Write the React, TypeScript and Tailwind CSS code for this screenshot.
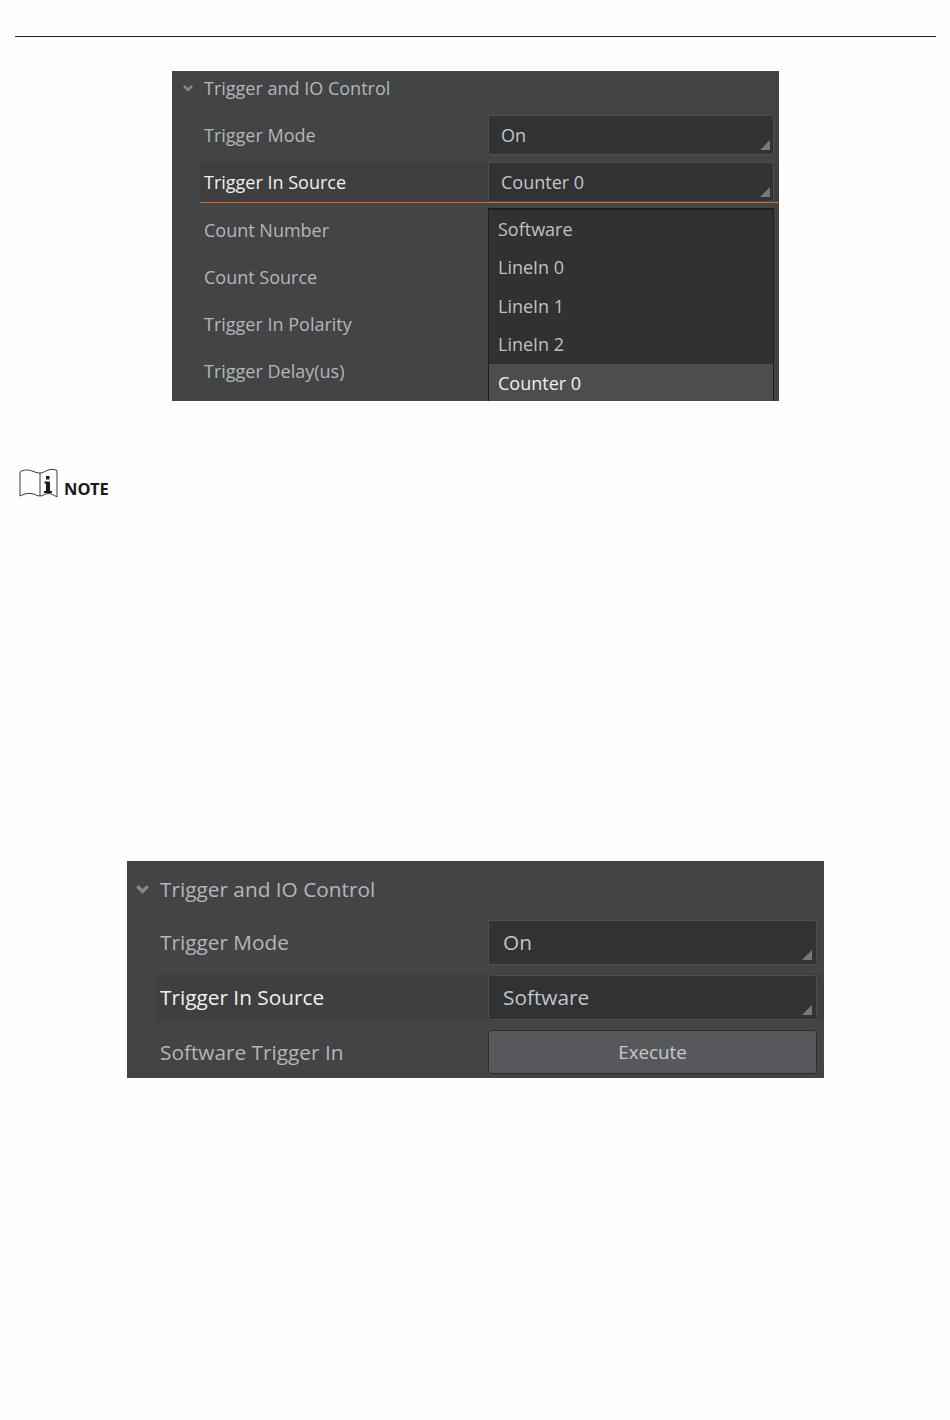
import React from 'react';

const FONT = "font-['Open_Sans','Noto_Sans',sans-serif]";

const Corner: React.FC<{ className: string }> = ({ className }) => (
  <svg className={`self-end shrink-0 ${className}`} width="10" height="10" viewBox="0 0 10 10">
    <polygon points="10,0 10,10 0,10" fill="#77787a" />
  </svg>
);

const Chevron: React.FC<{ size: number }> = ({ size }) => (
  <svg width={size} height={size * 0.7} viewBox="0 0 10 7">
    <path d="M1 1 L5 5 L9 1" fill="none" stroke="#848587" strokeWidth="2.6" />
  </svg>
);

const Select: React.FC<{ value: string; className: string; cornerClass: string }> = ({ value, className, cornerClass }) => (
  <div className={`${className} flex justify-between items-center bg-[#313234] border border-[#4e4f51] rounded-[3px]`}>
    <span className="pt-[1px] text-[#c3c5c7]">{value}</span>
    <Corner className={cornerClass} />
  </div>
);

const FirstPanel: React.FC = () => (
  <section className="relative w-[607px] h-[330px] ml-[172px] mt-[34px] bg-[#434446] overflow-hidden text-[18px] text-[#b4b6b8]">
    <header className="flex items-center h-[35px] pl-[11px]">
      <Chevron size={10} />
      <span className="ml-[11px]">Trigger and IO Control</span>
    </header>

    <div className="flex flex-col gap-[7px] mt-[9px] pl-[28px]">
      <div className="flex items-center h-[40px]">
        <span className="w-[288px] pl-[4px] pt-[1px]">Trigger Mode</span>
        <Select value="On" className="w-[286px] h-[40px] pl-[12px]" cornerClass="mb-[4px] mr-[3px]" />
      </div>
      <div className="flex items-center h-[41px] bg-[#3e3f3e] border-b border-[#e2661c]">
        <span className="w-[288px] pl-[4px] pt-[1px] text-[#f0f1f2]">Trigger In Source</span>
        <Select value="Counter 0" className="w-[286px] h-[40px] pl-[12px]" cornerClass="mb-[4px] mr-[3px]" />
      </div>
      <div className="flex items-center h-[40px] pl-[4px]">Count Number</div>
      <div className="flex items-center h-[40px] pl-[4px] pt-[1px]">Count Source</div>
      <div className="flex items-center h-[40px] pl-[4px] pt-[1px]">Trigger In Polarity</div>
      <div className="flex items-center h-[40px] pl-[4px] pt-[1px]">Trigger Delay(us)</div>
    </div>

    {/* open dropdown list, cut off by the panel */}
    <ul className="absolute left-[316px] top-[137px] w-[286px] h-[200px] bg-[#313131] border-t-2 border-x border-t-[#1e1e1e] border-x-[#1e1e1e] text-[#bfc1c3]">
      {['Software', 'LineIn 0', 'LineIn 1', 'LineIn 2'].map((item) => (
        <li key={item} className="flex items-center h-[38.5px] pl-[9px]">
          {item}
        </li>
      ))}
      <li className="flex items-center h-[38.5px] pl-[9px] bg-[#4d4d4d] text-[#f0f1f2]">Counter 0</li>
    </ul>
  </section>
);

const NoteHeading: React.FC = () => (
  <div className="flex items-end ml-[19px] mt-[66px] h-[32px]">
    <svg width="39" height="31" viewBox="0 0 39 31" fill="none" stroke="#3a3a3a" strokeWidth="1">
      <path d="M1 4 C5 1.5 9 1.5 13 3 C16 4 18 5 21 5 L21 28 C18 28 16 26 12 25.5 C8 25 5 26 1 28 Z" />
      <path d="M21 5 C24 5 26 3 30 1.8 C33 1 35 1.5 38 2.5 L38 29 C35 27 32 25.5 29 25.5 C26 25.5 24 28 21 28" />
      <rect x="27" y="8" width="3.5" height="3.5" fill="#1c1c1c" stroke="none" />
      <path d="M25.5 13.5 h5.5 v9.5 h2 v2 h-8 v-2 h2 v-7.5 h-1.5 z" fill="#1c1c1c" stroke="none" />
    </svg>
    <span className="ml-[6px] mb-[-3px] text-[16.5px] font-bold text-[#1a1a1a] font-['Noto_Sans',sans-serif]">NOTE</span>
  </div>
);

const SecondPanel: React.FC = () => (
  <section className="w-[697px] h-[217px] ml-[127px] mt-[362px] bg-[#434446] overflow-hidden text-[20.8px] text-[#b4b6b8]">
    <header className="flex items-center h-[57px] pl-[9px]">
      <Chevron size={13} />
      <span className="ml-[11px]">Trigger and IO Control</span>
    </header>

    <div className="flex flex-col gap-[9px] mt-[2px] pl-[29px]">
      <div className="flex items-center h-[45px]">
        <span className="w-[332px] pl-[4px] pt-[1px]">Trigger Mode</span>
        <Select value="On" className="w-[329px] h-[45px] pl-[14px]" cornerClass="mb-[4px] mr-[4px]" />
      </div>
      <div className="flex items-center h-[47px] bg-[#3e3f3e]">
        <span className="w-[332px] pl-[4px]">
          <span className="text-[#f0f1f2]">Trigger In Source</span>
        </span>
        <Select value="Software" className="w-[329px] h-[45px] pl-[14px]" cornerClass="mb-[4px] mr-[4px]" />
      </div>
      <div className="flex items-start h-[45px]">
        <span className="w-[332px] pl-[4px] pt-[7px]">Software Trigger In</span>
        <button className="w-[329px] h-[44px] pt-[1px] bg-[#57585b] border border-[#2b2c2e] rounded-[3px] text-[18.8px] text-[#c6c8ca]">
          Execute
        </button>
      </div>
    </div>
  </section>
);

const App: React.FC = () => (
  <div className={`w-[950px] h-[1420px] bg-[#fefefe] pt-[36px] overflow-hidden ${FONT}`}>
    <hr className="ml-[15px] w-[921px] border-t border-[#222]" />
    <FirstPanel />
    <NoteHeading />
    <SecondPanel />
  </div>
);

export default App;
